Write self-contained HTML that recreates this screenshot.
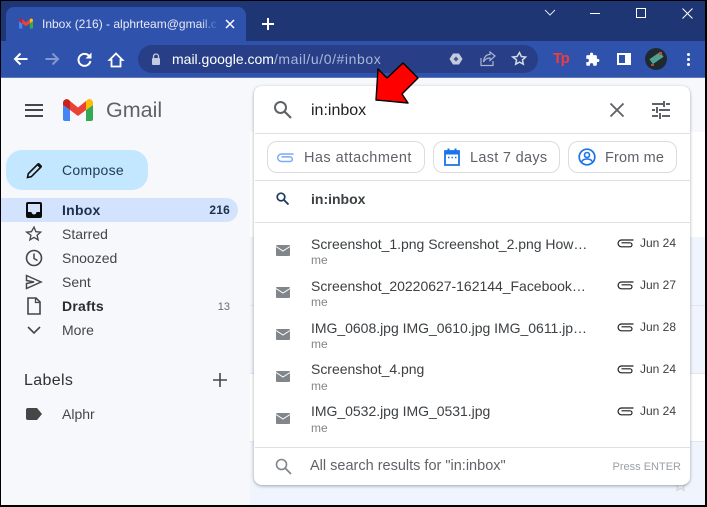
<!DOCTYPE html>
<html><head><meta charset="utf-8">
<style>
*{box-sizing:border-box}
html,body{margin:0;padding:0;width:707px;height:507px;overflow:hidden;background:#000}
#p{position:absolute;left:0;top:0;width:707px;height:507px;overflow:hidden;font-family:"Liberation Sans",sans-serif;background:#f6f8fc}
.a{position:absolute;white-space:nowrap}
svg{position:absolute;overflow:visible}
.nav{font-size:14px;color:#444746;left:62px;line-height:18px}
.b{letter-spacing:.25px}
.r{font-size:14px;color:#3c4043;left:311px;line-height:18px;letter-spacing:-.02px}
.m{font-size:12px;color:#80868b;left:311px;line-height:14px}
.d{font-size:12px;color:#3c4043;left:640px;line-height:14px}
.chip{position:absolute;top:141px;height:32px;border:1px solid #dadce0;border-radius:10px;background:#fff}
.chipt{font-size:14.5px;color:#5f6368;letter-spacing:.3px;line-height:18px;top:149px}
.hl{position:absolute;left:255px;width:435px;height:1px;background:#e0e0e0}
</style></head><body><div id="p">
<!-- chrome -->
<div class="a" style="left:0;top:0;width:707px;height:41px;background:#1f3675"></div>
<div class="a" style="left:0;top:41px;width:707px;height:37px;background:#2f52ad"></div>
<div class="a" style="left:6px;top:7px;width:240px;height:35px;background:#2f52ad;border-radius:8px 8px 0 0"></div>
<svg style="left:19px;top:18px" width="14" height="11" viewBox="0 0 30 22"><path d="M0 6l7 5v11H2a2 2 0 0 1-2-2z" fill="#4285f4"/><path d="M30 6l-7 5v11h5a2 2 0 0 0 2-2z" fill="#34a853"/><path d="M0 6V4C0 .8 3.500-1 6 1l1 1v9z" fill="#c5221f"/><path d="M23 11V2l1-1c2.500-2 6-.2 6 3v2z" fill="#fbbc04"/><path d="M7 2l8 6.500L23 2v9l-8 6-8-6z" fill="#ea4335"/></svg>
<div class="a" style="left:42px;top:16px;width:175px;overflow:hidden;font-size:12px;color:#e8eaf6;line-height:16px">Inbox (216) - alphrteam@gmail.com</div>
<div class="a" style="left:200px;top:12px;width:18px;height:24px;background:linear-gradient(90deg,rgba(47,82,173,0),#2f52ad)"></div>
<svg style="left:225px;top:19px" width="10" height="10"><path d="M1 1l8 8M9 1l-8 8" stroke="#fff" stroke-width="1.500"/></svg>
<svg style="left:262px;top:18px" width="12" height="12"><path d="M6 0v12M0 6h12" stroke="#fff" stroke-width="2"/></svg>
<svg style="left:544px;top:9px" width="12" height="7"><path d="M1 1l5 5 5-5" fill="none" stroke="#dfe3ee" stroke-width="1"/></svg>
<div class="a" style="left:590px;top:13px;width:10px;height:1px;background:#fff"></div>
<div class="a" style="left:636px;top:8px;width:10px;height:10px;border:1px solid #fff"></div>
<svg style="left:682px;top:8px" width="11" height="11"><path d="M.5.500l10 10M10.500.500l-10 10" stroke="#fff" stroke-width="1"/></svg>
<svg style="left:13px;top:52px" width="15" height="14"><path d="M14.500 7H2M7.500 1.500L2 7l5.500 5.500" fill="none" stroke="#fff" stroke-width="2"/></svg>
<svg style="left:45px;top:52px" width="15" height="14"><path d="M.5 7H13M7.500 1.500L13 7l-5.500 5.500" fill="none" stroke="#8598cd" stroke-width="2"/></svg>
<svg style="left:77px;top:52px" width="15" height="15"><path d="M12.500 4.500A6 6 0 1 0 13.400 9" fill="none" stroke="#fff" stroke-width="2"/><path d="M14.500 0.500v6h-6z" fill="#fff"/></svg>
<svg style="left:108px;top:52px" width="16" height="16"><path d="M8 1.500L1.500 8H3.500v6.500h9V8h2z" fill="none" stroke="#fff" stroke-width="1.800"/></svg>
<div class="a" style="left:138px;top:45px;width:400px;height:28px;border-radius:14px;background:#283f87"></div>
<svg style="left:151px;top:53px" width="10" height="12"><path d="M2.500 5V3.500a2.500 2.500 0 0 1 5 0V5" fill="none" stroke="#c4cbe0" stroke-width="1.300"/><rect x="1" y="5" width="8" height="7" rx="1" fill="#c4cbe0"/></svg>
<div class="a" style="left:172px;top:51px;font-size:14px;line-height:17px;color:#aab6d9"><span style="color:#fff">mail.google.com</span><span style="letter-spacing:.58px">/mail/u/0/#inbox</span></div>
<svg style="left:449px;top:53px" width="14" height="12"><path d="M4 .5h6L13.500 6 10 11.500H4L.5 6z" fill="#c5cce0"/><path d="M7 3.500L9.500 6 7 8.500 4.500 6z" fill="#45598f"/></svg>
<svg style="left:480px;top:51px" width="16" height="16"><path d="M1 7v7.500h12V10" fill="none" stroke="#aab3d0" stroke-width="1.200"/><path d="M15 5L10 1v2.500C6 3.500 4 6 3.500 11 5 8 7 7 10 7v2.500z" fill="none" stroke="#aab3d0" stroke-width="1.200"/></svg>
<svg style="left:512px;top:51px" width="15" height="15" viewBox="0 0 24 24"><path d="M12 2.500l2.900 6.300 6.900.8-5.100 4.700 1.400 6.800-6.100-3.400-6.100 3.400 1.400-6.800L1.200 9.600l6.900-.8z" fill="none" stroke="#d3d8e8" stroke-width="2.400"/></svg>
<div class="a" style="left:553px;top:50px;font-size:15px;font-weight:bold;color:#f23c3c;line-height:18px;letter-spacing:-1.500px">Tp</div>
<svg style="left:585px;top:52px" width="15" height="15" viewBox="0 0 24 24"><path d="M20.500 11H19V7a2 2 0 0 0-2-2h-4V3.500a2.500 2.500 0 0 0-5 0V5H4a2 2 0 0 0-2 2v3.800h1.500a2.700 2.700 0 0 1 0 5.400H2V20a2 2 0 0 0 2 2h3.800v-1.500a2.700 2.700 0 0 1 5.400 0V22H17a2 2 0 0 0 2-2v-4h1.500a2.500 2.500 0 0 0 0-5z" fill="#fff"/></svg>
<div class="a" style="left:617px;top:53px;width:14px;height:12px;border:2px solid #fff;border-right-width:6px;background:#2f52ad"></div>
<div class="a" style="left:645px;top:48px;width:22px;height:22px;border-radius:50%;background:#1f2a30;overflow:hidden"><div class="a" style="left:5px;top:7px;width:13px;height:6px;background:#4fa28e;transform:rotate(-35deg)"></div><div class="a" style="left:14px;top:4px;width:3px;height:3px;background:#c24a4a"></div><div class="a" style="left:6px;top:16px;width:3px;height:2px;background:#b84444"></div></div>
<div class="a" style="left:687px;top:53px;width:3px;height:3px;border-radius:50%;background:#fff;box-shadow:0 5px #fff,0 10px #fff"></div>
<div class="a" style="left:0;top:77px;width:707px;height:1px;background:#5f78bc"></div>

<!-- right background strip -->
<div class="a" style="left:250px;top:132px;width:455px;height:105px;background:#fff"></div>
<div class="a" style="left:250px;top:237px;width:455px;height:136px;background:#f0f4fd"></div>
<div class="a" style="left:250px;top:305px;width:455px;height:1px;background:#e3e6ee"></div>
<div class="a" style="left:250px;top:373px;width:455px;height:68px;background:#fff"></div>
<div class="a" style="left:250px;top:373px;width:455px;height:1px;background:#e3e6ee"></div>
<div class="a" style="left:250px;top:441px;width:455px;height:65px;background:#f0f4fd"></div>
<div class="a" style="left:250px;top:441px;width:455px;height:1px;background:#e3e6ee"></div>
<svg style="left:673px;top:478px" width="15" height="14" viewBox="0 0 24 24"><path d="M12 2.500l2.900 6.300 6.900.8-5.100 4.700 1.400 6.800-6.100-3.400-6.100 3.400 1.400-6.800L1.200 9.600l6.900-.8z" fill="none" stroke="#d4d7dc" stroke-width="2"/></svg>

<!-- sidebar -->
<div class="a" style="left:25px;top:104px;width:18px;height:2px;background:#444746;box-shadow:0 5px #444746,0 11px #444746"></div>
<svg style="left:63px;top:99px" width="30" height="22" viewBox="0 0 30 22"><path d="M0 6l7 5v11H2a2 2 0 0 1-2-2z" fill="#4285f4"/><path d="M30 6l-7 5v11h5a2 2 0 0 0 2-2z" fill="#34a853"/><path d="M0 6V4C0 .8 3.500-1 6 1l1 1v9z" fill="#c5221f"/><path d="M23 11V2l1-1c2.500-2 6-.2 6 3v2z" fill="#fbbc04"/><path d="M7 2l8 6.500L23 2v9l-8 6-8-6z" fill="#ea4335"/></svg>
<div class="a" style="left:106px;top:96px;font-size:21.500px;color:#5f6368;line-height:28px">Gmail</div>
<div class="a" style="left:6px;top:150px;width:142px;height:40px;border-radius:16px;background:#c2e7ff"></div>
<svg style="left:26px;top:162px" width="17" height="17" viewBox="0 0 17 17"><path d="M1.500 15.500l.8-3.800L11.500 2.500l3 3-9.200 9.200z" fill="none" stroke="#111" stroke-width="1.600"/><path d="M11.500 1.500a1.500 1.500 0 0 1 2.100 0l1.900 1.900a1.500 1.500 0 0 1 0 2.100l-1 1-4-4z" fill="#111"/></svg>
<div class="a" style="left:62px;top:161px;font-size:14px;color:#1f3a52;letter-spacing:.3px;line-height:18px">Compose</div>
<div class="a" style="left:1px;top:198px;width:237px;height:24px;border-radius:0 12px 12px 0;background:#d3e3fd"></div>
<svg style="left:26px;top:202px" width="16" height="16"><rect width="16" height="16" rx="2" fill="#0b0b0b"/><path d="M2 2h12v8h-3.500a2.500 2.500 0 0 1-5 0H2z" fill="#d3e3fd"/></svg>
<div class="a nav b" style="top:201px;font-weight:bold;color:#1c3148">Inbox</div>
<div class="a" style="right:477px;top:203px;font-size:12px;font-weight:bold;color:#1c3148;letter-spacing:.2px;line-height:14px">216</div>
<svg style="left:26px;top:225px" width="16" height="17" viewBox="0 0 24 24"><path d="M12 2.500l2.900 6.800 7.100.6-5.400 4.700 1.600 7-6.200-3.700-6.200 3.700 1.600-7L1 9.900l7.100-.6z" fill="none" stroke="#444746" stroke-width="2"/></svg>
<div class="a nav" style="top:225px">Starred</div>
<svg style="left:25px;top:249px" width="18" height="18"><circle cx="9" cy="9" r="7.500" fill="none" stroke="#444746" stroke-width="1.600"/><path d="M9 4.500V9.500L12.500 11.500" fill="none" stroke="#444746" stroke-width="1.500"/></svg>
<div class="a nav" style="top:249px">Snoozed</div>
<svg style="left:25px;top:274px" width="18" height="16"><path d="M1.500 1.500L16 8 1.500 14.500V9.500L9 8 1.500 6.500z" fill="none" stroke="#444746" stroke-width="1.500"/></svg>
<div class="a nav" style="top:273px">Sent</div>
<svg style="left:27px;top:297px" width="14" height="18"><path d="M1 1h8l4 4v12H1z" fill="none" stroke="#444746" stroke-width="1.600"/><path d="M8.500 1v4.500H13" fill="none" stroke="#444746" stroke-width="1.300"/></svg>
<div class="a nav b" style="top:297px;font-weight:bold;color:#2a2c2e">Drafts</div>
<div class="a" style="right:477px;top:300px;font-size:11px;color:#6a6d70;line-height:14px">13</div>
<svg style="left:27px;top:326px" width="14" height="9"><path d="M1 1l6 6 6-6" fill="none" stroke="#444746" stroke-width="1.600"/></svg>
<div class="a nav" style="top:321px">More</div>
<div class="a" style="left:24px;top:371px;font-size:16px;color:#2f3133;letter-spacing:.35px;line-height:20px">Labels</div>
<svg style="left:213px;top:373px" width="14" height="14"><path d="M7 0v14M0 7h14" stroke="#444746" stroke-width="1.600"/></svg>
<svg style="left:26px;top:408px" width="16" height="12"><path d="M2 0h9l5 6-5 6H2a2 2 0 0 1-2-2V2a2 2 0 0 1 2-2z" fill="#444746"/></svg>
<div class="a nav" style="top:405px">Alphr</div>

<!-- panel -->
<div class="a" style="left:254px;top:86px;width:436px;height:399px;background:#fff;border-radius:8px;box-shadow:0 1px 3px rgba(60,64,67,.45)"></div>
<svg style="left:273px;top:100px" width="19" height="19"><circle cx="7.500" cy="7.500" r="5.500" fill="none" stroke="#5f6368" stroke-width="2"/><path d="M11.500 11.500l6.500 6.500" stroke="#5f6368" stroke-width="2.200"/></svg>
<div class="a" style="left:311px;top:101px;font-size:16px;color:#202124;line-height:19px">in:inbox</div>
<svg style="left:610px;top:103px" width="14" height="14"><path d="M.5.500l13 13M13.500.500l-13 13" stroke="#5f6368" stroke-width="1.900"/></svg>
<svg style="left:652px;top:101px" width="18" height="18"><path d="M0 3h11M14 3h4M0 9h3M7 9h11M0 15h6M10 15h8" stroke="#5f6368" stroke-width="2"/><path d="M12 0v6M5 6v6M8 12v6" stroke="#5f6368" stroke-width="2"/></svg>
<div class="hl" style="top:133px"></div>
<div class="chip" style="left:267px;width:158px"></div>
<svg style="left:277px;top:153px" width="17" height="10" viewBox="0 0 17 10"><path d="M16.500 1H4.500a3.700 3.700 0 0 0 0 7.500H13a2.300 2.300 0 0 0 0-4.600H4.500" fill="none" stroke="#7baaf7" stroke-width="1.500"/></svg>
<div class="a chipt" style="left:304px;letter-spacing:.45px">Has attachment</div>
<div class="chip" style="left:433px;width:127px"></div>
<svg style="left:444px;top:148px" width="16" height="18"><path d="M1 3h14v14H1z" fill="none" stroke="#1a73e8" stroke-width="1.800"/><path d="M1 3h14v3.500H1zM3.500 0.500h2v3h-2zM10.500 0.500h2v3h-2z" fill="#1a73e8"/><path d="M4 9.500h1.500M7.500 9.500H9M11 9.500h1.500" stroke="#1a73e8" stroke-width="1.500"/></svg>
<div class="a chipt" style="left:470px">Last 7 days</div>
<div class="chip" style="left:568px;width:109px"></div>
<svg style="left:578px;top:148px" width="18" height="18"><circle cx="9" cy="9" r="7.800" fill="none" stroke="#1a73e8" stroke-width="1.700"/><circle cx="9" cy="7" r="2.500" fill="none" stroke="#1a73e8" stroke-width="1.600"/><path d="M3.500 14c1-2.500 3-3 5.500-3s4.500.5 5.500 3" fill="none" stroke="#1a73e8" stroke-width="1.600"/></svg>
<div class="a chipt" style="left:605px;letter-spacing:.15px">From me</div>
<div class="hl" style="top:180px"></div>
<svg style="left:276px;top:192px" width="13" height="13"><circle cx="5" cy="5" r="3.800" fill="none" stroke="#1f3a5f" stroke-width="1.700"/><path d="M8 8l4.500 4.500" stroke="#1f3a5f" stroke-width="1.900"/></svg>
<div class="a" style="left:311px;top:190px;font-size:14px;font-weight:bold;color:#3c4043;line-height:18px">in:inbox</div>
<div class="hl" style="top:222px"></div>

<svg style="left:276px;top:245px" width="14" height="11"><rect width="14" height="11" rx="1" fill="#80868b"/><path d="M0 1.500l7 4.500 7-4.500" fill="none" stroke="#fff" stroke-width="1"/></svg>
<div class="a r" style="top:235px">Screenshot_1.png Screenshot_2.png How…</div>
<div class="a m" style="top:253px">me</div>
<svg style="left:617px;top:239px" width="17" height="9" viewBox="0 0 17 9"><path d="M16.500 1H4.500a3.300 3.300 0 0 0 0 6.800H13a2 2 0 0 0 0-4H4.500" fill="none" stroke="#202124" stroke-width="1.200"/></svg>
<div class="a d" style="top:236px">Jun 24</div>

<svg style="left:276px;top:287px" width="14" height="11"><rect width="14" height="11" rx="1" fill="#80868b"/><path d="M0 1.500l7 4.500 7-4.500" fill="none" stroke="#fff" stroke-width="1"/></svg>
<div class="a r" style="top:277px">Screenshot_20220627-162144_Facebook…</div>
<div class="a m" style="top:295px">me</div>
<svg style="left:617px;top:281px" width="17" height="9" viewBox="0 0 17 9"><path d="M16.500 1H4.500a3.300 3.300 0 0 0 0 6.800H13a2 2 0 0 0 0-4H4.500" fill="none" stroke="#202124" stroke-width="1.200"/></svg>
<div class="a d" style="top:278px">Jun 27</div>

<svg style="left:276px;top:329px" width="14" height="11"><rect width="14" height="11" rx="1" fill="#80868b"/><path d="M0 1.500l7 4.500 7-4.500" fill="none" stroke="#fff" stroke-width="1"/></svg>
<div class="a r" style="top:319px">IMG_0608.jpg IMG_0610.jpg IMG_0611.jp…</div>
<div class="a m" style="top:337px">me</div>
<svg style="left:617px;top:323px" width="17" height="9" viewBox="0 0 17 9"><path d="M16.500 1H4.500a3.300 3.300 0 0 0 0 6.800H13a2 2 0 0 0 0-4H4.500" fill="none" stroke="#202124" stroke-width="1.200"/></svg>
<div class="a d" style="top:320px">Jun 28</div>

<svg style="left:276px;top:371px" width="14" height="11"><rect width="14" height="11" rx="1" fill="#80868b"/><path d="M0 1.500l7 4.500 7-4.500" fill="none" stroke="#fff" stroke-width="1"/></svg>
<div class="a r" style="top:360px">Screenshot_4.png</div>
<div class="a m" style="top:379px">me</div>
<svg style="left:617px;top:365px" width="17" height="9" viewBox="0 0 17 9"><path d="M16.500 1H4.500a3.300 3.300 0 0 0 0 6.800H13a2 2 0 0 0 0-4H4.500" fill="none" stroke="#202124" stroke-width="1.200"/></svg>
<div class="a d" style="top:362px">Jun 24</div>

<svg style="left:276px;top:413px" width="14" height="11"><rect width="14" height="11" rx="1" fill="#80868b"/><path d="M0 1.500l7 4.500 7-4.500" fill="none" stroke="#fff" stroke-width="1"/></svg>
<div class="a r" style="top:402px">IMG_0532.jpg IMG_0531.jpg</div>
<div class="a m" style="top:421px">me</div>
<svg style="left:617px;top:407px" width="17" height="9" viewBox="0 0 17 9"><path d="M16.500 1H4.500a3.300 3.300 0 0 0 0 6.800H13a2 2 0 0 0 0-4H4.500" fill="none" stroke="#202124" stroke-width="1.200"/></svg>
<div class="a d" style="top:404px">Jun 24</div>

<div class="hl" style="top:447px"></div>
<svg style="left:275px;top:458px" width="17" height="17"><circle cx="6.500" cy="6.500" r="5" fill="none" stroke="#80868b" stroke-width="1.600"/><path d="M10 10l6 6" stroke="#80868b" stroke-width="1.800"/></svg>
<div class="a" style="left:310px;top:457px;font-size:14.500px;color:#5f6368;line-height:18px">All search results for "in:inbox"</div>
<div class="a" style="right:26px;top:460px;font-size:11px;color:#9aa0a6;line-height:14px">Press ENTER</div>

<!-- arrow -->
<svg style="left:0;top:0" width="707" height="507"><polygon points="378,69 376,100 408,103 402,94 418,78 403,63 387,78" fill="#ff0000" stroke="#000" stroke-width="1.400" stroke-linejoin="round"/></svg>

<!-- frame -->
<div class="a" style="left:0;top:0;width:707px;height:1px;background:#000"></div>
<div class="a" style="left:0;top:0;width:1px;height:507px;background:#000"></div>
<div class="a" style="left:705px;top:0;width:2px;height:507px;background:#000"></div>
<div class="a" style="left:0;top:505px;width:707px;height:2px;background:#000"></div>
</div></body></html>
